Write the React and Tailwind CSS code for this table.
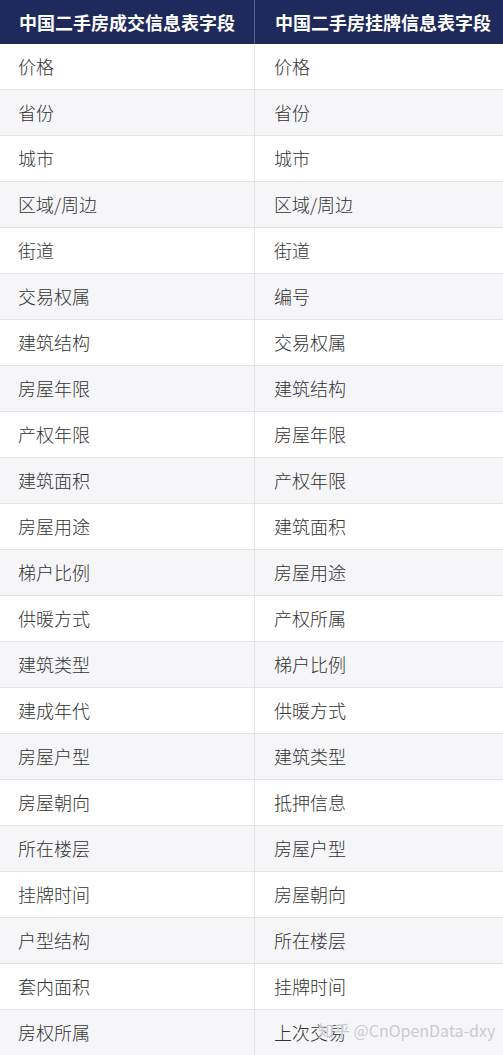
import React from 'react';

const deal = ['价格', '省份', '城市', '区域/周边', '街道', '交易权属', '建筑结构', '房屋年限', '产权年限', '建筑面积', '房屋用途', '梯户比例', '供暖方式', '建筑类型', '建成年代', '房屋户型', '房屋朝向', '所在楼层', '挂牌时间', '户型结构', '套内面积', '房权所属'];
const listing = ['价格', '省份', '城市', '区域/周边', '街道', '编号', '交易权属', '建筑结构', '房屋年限', '产权年限', '建筑面积', '房屋用途', '产权所属', '梯户比例', '供暖方式', '建筑类型', '抵押信息', '房屋户型', '房屋朝向', '所在楼层', '挂牌时间', '上次交易'];

const font = { fontFamily: '"Microsoft YaHei", "Noto Sans CJK SC", sans-serif' };

export default function App() {
	return (
		<div className="relative w-[503px] h-[1055px] overflow-hidden bg-white" style={font}>
			{/* header */}
			<div className="grid grid-cols-[255px_1fr] h-[44px] bg-[#1f2a5c] text-white font-bold text-[18px]">
				<div className="flex items-center pl-[19px] border-r border-[#5a6288]">中国二手房成交信息表字段</div>
				<div className="flex items-center pl-[20px]">中国二手房挂牌信息表字段</div>
			</div>

			{deal.map((d, i) => (
				<div
					key={i}
					className={`grid grid-cols-[255px_1fr] h-[46px] border-b border-[#e3e4e6] text-[18px] font-light text-[#333] ${i % 2 ? 'bg-[#f6f6f8]' : 'bg-white'}`}
				>
					<div className="flex items-center pl-[18px] border-r border-[#e3e4e6]">{d}</div>
					<div className="flex items-center pl-[19px]">{listing[i]}</div>
				</div>
			))}

			{/* watermark */}
			<div className="absolute left-[318px] top-[1018px] text-[16px] text-[#c9cacd] whitespace-nowrap [text-shadow:0_0_1px_#fff]">
				知乎 @CnOpenData-dxy
			</div>
		</div>
	);
}
